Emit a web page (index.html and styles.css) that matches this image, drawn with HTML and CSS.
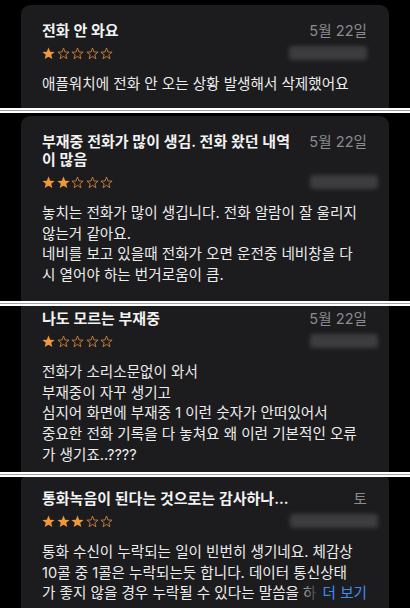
FILE: index.html
```html
<!DOCTYPE html>
<html lang="ko">
<head>
<meta charset="utf-8">
<link rel="stylesheet" href="styles.css">
</head>
<body>
<svg width="0" height="0" class="defs">
  <defs>
    <symbol id="sf" viewBox="0 0 24 24"><polygon points="12,1 15.1,8.6 23.3,9.1 17,14.3 19.1,22.3 12,17.9 4.9,22.3 7,14.3 0.7,9.1 8.9,8.6" fill="#f0983a"/></symbol>
    <symbol id="se" viewBox="0 0 24 24"><polygon points="12,1.8 14.7,9.2 22.3,9.5 16.3,14.4 18.3,21.6 12,17.4 5.7,21.6 7.7,14.4 1.7,9.5 9.3,9.2" fill="none" stroke="#c7803d" stroke-width="1.7" stroke-linejoin="round"/></symbol>
  </defs>
</svg>

<div class="panel p1">
  <div class="card">
    <div class="head">
      <div class="title">전화 안 와요</div>
      <div class="date">5월 22일</div>
    </div>
    <div class="meta">
      <div class="stars"><svg><use href="#sf"/></svg><svg><use href="#se"/></svg><svg><use href="#se"/></svg><svg><use href="#se"/></svg><svg><use href="#se"/></svg></div>
      <div class="blur b1"></div>
    </div>
    <div class="body">애플워치에 전화 안 오는 상황 발생해서 삭제했어요</div>
  </div>
</div>
<div class="bar"></div>

<div class="panel p2">
  <div class="card">
    <div class="head">
      <div class="title">부재중 전화가 많이 생김. 전화 왔던 내역<br>이 많음</div>
      <div class="date">5월 22일</div>
    </div>
    <div class="meta">
      <div class="stars"><svg><use href="#sf"/></svg><svg><use href="#sf"/></svg><svg><use href="#se"/></svg><svg><use href="#se"/></svg><svg><use href="#se"/></svg></div>
      <div class="blur b2"></div>
    </div>
    <div class="body">놓치는 전화가 많이 생깁니다. 전화 알람이 잘 울리지<br>않는거 같아요.<br>네비를 보고 있을때 전화가 오면 운전중 네비창을 다<br>시 열어야 하는 번거로움이 큼.</div>
  </div>
</div>
<div class="bar"></div>

<div class="panel p3">
  <div class="card">
    <div class="head">
      <div class="title">나도 모르는 부재중</div>
      <div class="date">5월 22일</div>
    </div>
    <div class="meta">
      <div class="stars"><svg><use href="#sf"/></svg><svg><use href="#se"/></svg><svg><use href="#se"/></svg><svg><use href="#se"/></svg><svg><use href="#se"/></svg></div>
      <div class="blur b3"></div>
    </div>
    <div class="body">전화가 소리소문없이 와서<br>부재중이 자꾸 생기고<br>심지어 화면에 부재중 1 이런 숫자가 안떠있어서<br>중요한 전화 기록을 다 놓쳐요 왜 이런 기본적인 오류<br>가 생기죠..????</div>
  </div>
</div>
<div class="bar"></div>

<div class="panel p4">
  <div class="card">
    <div class="head">
      <div class="title">통화녹음이 된다는 것으로는 감사하나...</div>
      <div class="date">토</div>
    </div>
    <div class="meta">
      <div class="stars"><svg><use href="#sf"/></svg><svg><use href="#sf"/></svg><svg><use href="#sf"/></svg><svg><use href="#se"/></svg><svg><use href="#se"/></svg></div>
      <div class="blur b4"></div>
    </div>
    <div class="body more">통화 수신이 누락되는 일이 빈번히 생기네요. 체감상<br>10콜 중 1콜은 누락되는듯 합니다. 데이터 통신상태<br>가 좋지 않을 경우 누락될 수 있다는 말씀을 하<span class="more-btn">더 보기</span></div>
  </div>
</div>
</body>
</html>
```
FILE: styles.css
```css
html, body {
  margin: 0;
  padding: 0;
  background: #000;
}
body {
  width: 410px;
  height: 608px;
  overflow: hidden;
  font-family: "Inter", "Noto Sans CJK KR", sans-serif;
  color: #ededed;
}
.defs {
  position: absolute;
  width: 0;
  height: 0;
}
.panel {
  overflow: hidden;
}
.p1 { height: 108px; }
.p2 { height: 188px; }
.p3 { height: 166px; }
.p4 { height: 131px; }
.p1 .card { margin-top: 5px; }
.p2 .card { margin-top: 3px; }
.p3 .card { margin-top: -13px; }
.p4 .card { margin-top: -4px; }

.bar {
  height: 5px;
  background: #fff;
  display: flex;
  align-items: center;
}
.bar::after {
  content: "";
  display: block;
  width: 100%;
  height: 1px;
  background: #a0a0a0;
}

.card {
  margin-left: 21px;
  width: 368px;
  box-sizing: border-box;
  padding: 17px 22px 30px 21px;
  background: #1c1c1e;
  border-radius: 9px;
}
.head {
  display: flex;
  justify-content: space-between;
  align-items: flex-start;
  gap: 12px;
}
.title {
  font-size: 15px;
  line-height: 18px;
  font-weight: 600;
  color: #f2f2f2;
}
.date {
  font-size: 14.6px;
  line-height: 18px;
  color: #8b8b90;
  white-space: nowrap;
}
.meta {
  display: flex;
  justify-content: space-between;
  align-items: center;
  height: 14px;
  margin-top: 6px;
  position: relative;
}
.stars {
  display: flex;
  gap: 1.6px;
}
.stars svg {
  width: 13px;
  height: 13px;
}
.blur {
  height: 14px;
  background: #3d3d40;
  filter: blur(2px);
  border-radius: 3px;
}
.b1 { width: 78px; margin-right: 0; }
.b2 { width: 68px; margin-right: -11px; }
.b3 { width: 68px; margin-right: -11px; }
.b4 { width: 88px; margin-right: -11px; }
.body {
  margin-top: 14px;
  font-size: 14.6px;
  line-height: 20.7px;
  color: #ececec;
  position: relative;
  white-space: nowrap;
}
.more-btn {
  position: absolute;
  right: 0;
  bottom: 0;
  padding-left: 26px;
  color: #3f8cf0;
  background: linear-gradient(to right, rgba(28,28,30,0) 0, #1c1c1e 22px);
}
```
